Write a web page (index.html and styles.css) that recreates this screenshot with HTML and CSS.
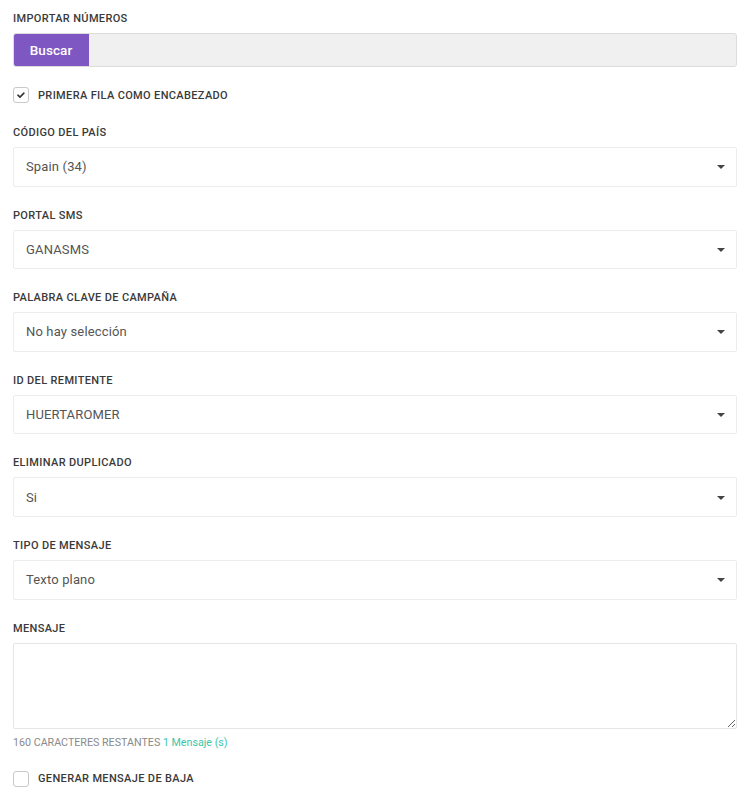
FILE: index.html
```html
<!DOCTYPE html>
<html lang="es">
<head>
<meta charset="utf-8">
<title>Importar números</title>
<link rel="stylesheet" href="styles.css">
</head>
<body>
<form class="form">
  <div class="field">
    <div class="label">Importar números</div>
    <div class="file">
      <span class="file-btn">Buscar</span>
      <span class="file-name"></span>
    </div>
  </div>
  <label class="check-row">
    <span class="box checked"><svg viewBox="0 0 16 16" width="16" height="16"><path d="M4.5 8.2l2.3 2.2 4.5-4.6" fill="none" stroke="#333" stroke-width="1.8" stroke-linecap="round" stroke-linejoin="round"/></svg></span>
    <span class="check-text">Primera fila como encabezado</span>
  </label>
  <div class="field">
    <div class="label">Código del país</div>
    <div class="select"><span>Spain (34)</span><i class="caret"></i></div>
  </div>
  <div class="field">
    <div class="label">Portal SMS</div>
    <div class="select"><span>GANASMS</span><i class="caret"></i></div>
  </div>
  <div class="field">
    <div class="label">Palabra clave de campaña</div>
    <div class="select"><span>No hay selección</span><i class="caret"></i></div>
  </div>
  <div class="field">
    <div class="label">ID del remitente</div>
    <div class="select"><span>HUERTAROMER</span><i class="caret"></i></div>
  </div>
  <div class="field">
    <div class="label">Eliminar duplicado</div>
    <div class="select"><span>Si</span><i class="caret"></i></div>
  </div>
  <div class="field">
    <div class="label">Tipo de mensaje</div>
    <div class="select"><span>Texto plano</span><i class="caret"></i></div>
  </div>
  <div class="field last">
    <div class="label">Mensaje</div>
    <textarea class="textarea"></textarea>
    <div class="counter">160 caracteres restantes <span class="count-msg">1 Mensaje (s)</span></div>
  </div>
  <label class="check-row bottom">
    <span class="box"></span>
    <span class="check-text">Generar mensaje de baja</span>
  </label>
</form>
</body>
</html>
```

FILE: styles.css
```css
* { box-sizing: border-box; }
html, body { margin: 0; background: #fff; }
body {
  font-family: Roboto, "Liberation Sans", Arial, sans-serif;
  color: #444;
  padding: 11px 13px 0 13px;
}
.form { display: flex; flex-direction: column; }
.field { display: flex; flex-direction: column; margin-bottom: 21px; }
.label {
  font-size: 11px;
  line-height: 16px;
  font-weight: 500;
  letter-spacing: 0.35px;
  text-transform: uppercase;
  color: #3a3a3a;
  margin-bottom: 6px;
}
.field:first-child { margin-bottom: 20px; }
.file {
  display: flex;
  height: 34px;
  border: 1px solid #dcdcdc;
  border-radius: 3px;
  background: #f0f0f0;
  overflow: hidden;
}
.file-btn {
  width: 76px;
  margin: -1px 0 -1px -1px;
  background: #7e57c2;
  color: #fff;
  font-size: 13.5px;
  font-weight: 500;
  letter-spacing: 0.1px;
  display: flex;
  align-items: center;
  justify-content: center;
  border-radius: 3px 0 0 3px;
}
.file-name { flex: 1; }
.check-row {
  display: flex;
  align-items: center;
  gap: 9px;
  height: 16px;
  margin: 0 0 22px 0;
}
.box {
  width: 16px;
  height: 16px;
  border: 1px solid #c9c9c9;
  border-radius: 3px;
  background: #fff;
  display: flex;
  align-items: center;
  justify-content: center;
}
.box svg { display: block; }
.check-text {
  font-size: 11px;
  font-weight: 500;
  letter-spacing: 0.35px;
  text-transform: uppercase;
  color: #3a3a3a;
}
.select {
  height: 39.6px;
  border: 1px solid #ececec;
  border-radius: 2px;
  background: #fff;
  display: flex;
  align-items: center;
  justify-content: space-between;
  padding: 0 11px 0 12px;
  font-size: 13px;
  letter-spacing: 0.15px;
  color: #555;
}
.caret {
  width: 0;
  height: 0;
  border-left: 4px solid transparent;
  border-right: 4px solid transparent;
  border-top: 4px solid #444;
  margin-top: 1px;
}
.textarea {
  display: block;
  width: 100%;
  height: 86px;
  border: 1px solid #e6e6e6;
  border-radius: 2px;
  resize: vertical;
  font-family: inherit;
  font-size: 13px;
  margin: 0;
}
.counter {
  margin-top: 6px;
  font-size: 10.7px;
  line-height: 16px;
  text-transform: uppercase;
  color: #8a8a8a;
}
.count-msg { text-transform: none; color: #3cc6a9; }
.field.last { margin-bottom: 20px; }
.check-row.bottom { margin: 0; }
```
